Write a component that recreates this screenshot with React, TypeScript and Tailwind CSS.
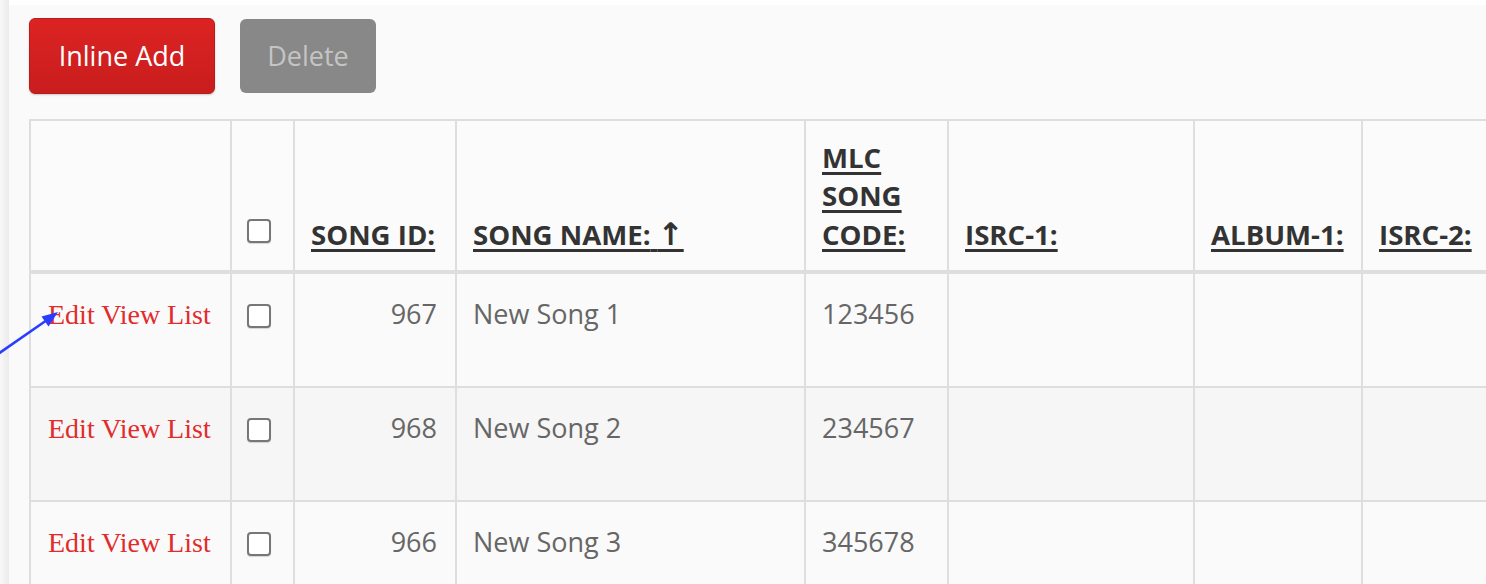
import React from "react";

const cols = "grid-cols-[201px_63px_162px_349px_143px_246px_168px_200px]";

const songs = [
  { id: 967, name: "New Song 1", code: "123456" },
  { id: 968, name: "New Song 2", code: "234567" },
  { id: 966, name: "New Song 3", code: "345678" },
];

function Box() {
  return <div className="h-[24px] w-[24px] rounded-[4px] border-2 border-[#777] bg-white shadow-[0_1px_1px_rgba(0,0,0,0.15)]" />;
}

function Head({ children }: { children?: React.ReactNode }) {
  return (
    <div className="flex h-[153px] flex-col justify-end border-b-4 border-l-2 border-[#dedede] bg-[#fbfbfb] px-[16px] pb-[17px] text-[27.6px] font-bold leading-[38.5px] text-[#333]">
      {children}
    </div>
  );
}

function Link({ children }: { children: React.ReactNode }) {
  return <span className="underline decoration-[2.5px] underline-offset-[4px]">{children}</span>;
}

export default function App() {
  return (
    <div
      className="relative flex h-[584px] w-[1486px] overflow-hidden bg-white"
      style={{ fontFamily: '"Open Sans", "DejaVu Sans", sans-serif' }}
    >
      <div className="w-[9px] shrink-0 bg-gradient-to-r from-[#f8f8f8] to-[#ebebeb]" />
      <div className="mt-[5px] min-w-0 flex-1 bg-[#fafafa] pl-[20px] pt-[13px]">
        {/* toolbar */}
        <div className="flex items-center gap-[25px]">
          <button className="flex h-[76px] w-[186px] items-center justify-center rounded-[6px] border border-[#b81b1b] bg-gradient-to-b from-[#dc2323] to-[#c91d1d] text-[27px] text-white shadow-[0_1px_2px_rgba(0,0,0,0.2)]">
            Inline Add
          </button>
          <button className="flex h-[74px] w-[136px] items-center justify-center rounded-[6px] bg-[#878887] text-[27px] text-[#c4c4c4]">
            Delete
          </button>
        </div>

        {/* table */}
        <div className={`mt-[25px] grid w-max border-t-2 border-[#dedede] ${cols}`}>
          <Head />
          <div className="flex h-[153px] flex-col justify-end border-b-4 border-l-2 border-[#dedede] bg-[#fbfbfb] pb-[27px] pl-[15px]">
            <Box />
          </div>
          <Head>
            <Link>SONG ID:</Link>
          </Head>
          <Head>
            <div className="leading-[38.5px]">
              <Link>
                SONG NAME:{" "}
                <span className="text-[31px] font-bold leading-none" style={{ fontFamily: '"DejaVu Sans", sans-serif' }}>
                  ↑
                </span>
              </Link>
            </div>
          </Head>
          <Head>
            <div>
              <Link>MLC</Link>
            </div>
            <div>
              <Link>SONG</Link>
            </div>
            <div>
              <Link>CODE:</Link>
            </div>
          </Head>
          <Head>
            <Link>ISRC-1:</Link>
          </Head>
          <Head>
            <Link>ALBUM-1:</Link>
          </Head>
          <Head>
            <Link>ISRC-2:</Link>
          </Head>

          {songs.map((s, i) => {
            const bg = i % 2 === 1 ? "bg-[#f6f6f6]" : "bg-[#fafafa]";
            const cell = `h-[114px] border-b-2 border-l-2 border-[#dedede] pt-[21px] text-[27px] leading-[38.5px] text-[#666] ${bg}`;
            return (
              <React.Fragment key={s.id}>
                <div className={`${cell} whitespace-nowrap pl-[17px]`}>
                  <span className="text-[28px] text-[#e22b2b]" style={{ fontFamily: '"Liberation Serif", serif' }}>
                    Edit View List
                  </span>
                </div>
                <div className={`${cell} pl-[15px] pt-[30px]`}>
                  <Box />
                </div>
                <div className={`${cell} pr-[18px] text-right`}>{s.id}</div>
                <div className={`${cell} px-[16px]`}>{s.name}</div>
                <div className={`${cell} px-[16px]`}>{s.code}</div>
                <div className={cell} />
                <div className={cell} />
                <div className={cell} />
              </React.Fragment>
            );
          })}
        </div>
      </div>

      {/* annotation arrow */}
      <svg className="absolute left-0 top-[300px]" width="70" height="60" viewBox="0 0 70 60">
        <line x1="-2" y1="54" x2="47" y2="20" stroke="#2a3cff" strokeWidth="2.5" />
        <polygon points="58,12 48.5,26.5 41.5,16.5" fill="#2a3cff" />
      </svg>
    </div>
  );
}
